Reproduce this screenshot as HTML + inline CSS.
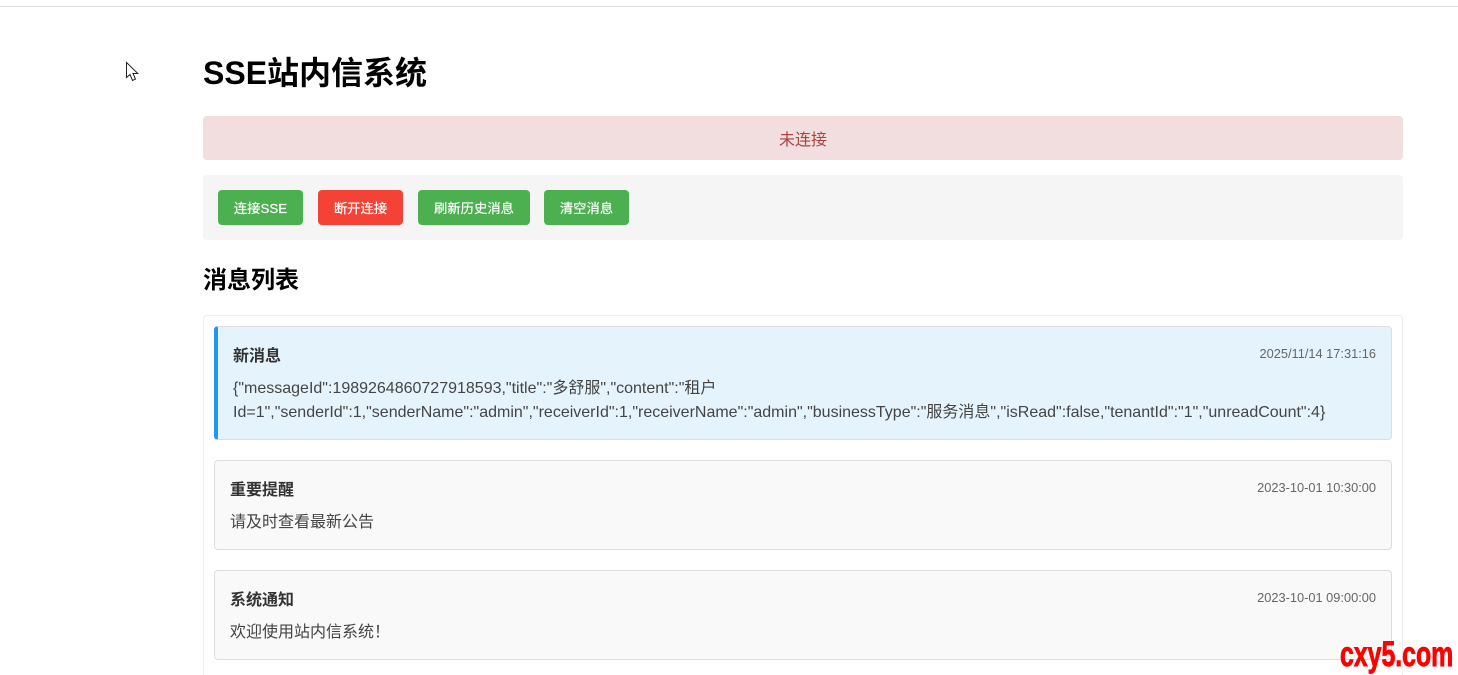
<!DOCTYPE html>
<html lang="zh-CN">
<head>
<meta charset="utf-8">
<title>SSE站内信系统</title>
<style>
html,body{margin:0;padding:0;background:#fff;width:1458px;height:675px;overflow:hidden;}
#p{position:relative;width:1458px;height:675px;overflow:hidden;font-family:"Liberation Sans","Noto Sans CJK SC",sans-serif;color:#333;}
.a{position:absolute;white-space:nowrap;}
.box{position:absolute;box-sizing:border-box;}
.btn{position:absolute;top:190px;height:35px;border-radius:4px;color:#fff;font-size:13.33px;line-height:37px;text-align:center;background:#4caf50;-webkit-text-stroke:0.2px #fff;}
.item{position:absolute;box-sizing:border-box;left:214px;width:1178px;border:1px solid #ddd;border-radius:4px;background:#f9f9f9;}
.t{font-size:16px;font-weight:bold;color:#333;line-height:24px;}
.c{font-size:16px;color:#444;line-height:24px;}
.d{font-size:12.8px;color:#666;line-height:16px;right:82px;}
</style>
</head>
<body>
<div id="p">
<div class="box" style="left:0;top:6px;width:1458px;height:1px;background:#e3e3e3;"></div>

<svg class="a" style="left:125px;top:61px" width="16" height="22" viewBox="0 0 16 22">
<path d="M1.5 1.5V16.5L5 13.5L7.5 19.5L10.5 18L8 12.5H12.8Z" fill="#fff" stroke="#222" stroke-width="1" stroke-linejoin="miter"/>
</svg>

<div class="a" style="left:203px;top:52px;font-size:32px;font-weight:bold;line-height:42px;color:#000;">SSE站内信系统</div>

<div class="box" style="left:203px;top:116px;width:1200px;height:44px;background:#f2dede;border-radius:4px;color:#a94442;font-size:16px;line-height:49px;text-align:center;">未连接</div>

<div class="box" style="left:203px;top:175px;width:1200px;height:65px;background:#f5f5f5;border-radius:4px;"></div>
<div class="btn" style="left:218px;width:85px;">连接SSE</div>
<div class="btn" style="left:318px;width:85px;background:#f44336;">断开连接</div>
<div class="btn" style="left:418px;width:112px;">刷新历史消息</div>
<div class="btn" style="left:544px;width:85px;">清空消息</div>

<div class="a" style="left:203px;top:265px;font-size:24px;font-weight:bold;line-height:32px;color:#000;">消息列表</div>

<div class="box" style="left:203px;top:315px;width:1200px;height:360px;border:1px solid #eee;border-bottom:0;border-radius:4px 4px 0 0;"></div>

<div class="item" style="top:326px;height:114px;background:#e5f3fd;border-left:4px solid #2196f3;"></div>
<div class="a t" style="left:233px;top:345px;">新消息</div>
<div class="a d" style="top:346px;">2025/11/14 17:31:16</div>
<div class="a c" style="left:233px;top:377px;">{"messageId":1989264860727918593,"title":"多舒服","content":"租户</div>
<div class="a c" style="left:233px;top:401px;">Id=1","senderId":1,"senderName":"admin","receiverId":1,"receiverName":"admin","businessType":"服务消息","isRead":false,"tenantId":"1","unreadCount":4}</div>

<div class="item" style="top:460px;height:90px;"></div>
<div class="a t" style="left:230px;top:479px;">重要提醒</div>
<div class="a d" style="top:480px;">2023-10-01 10:30:00</div>
<div class="a c" style="left:230px;top:511px;">请及时查看最新公告</div>

<div class="item" style="top:570px;height:90px;"></div>
<div class="a t" style="left:230px;top:589px;">系统通知</div>
<div class="a d" style="top:590px;">2023-10-01 09:00:00</div>
<div class="a c" style="left:230px;top:621px;">欢迎使用站内信系统！</div>

<div class="a" style="left:1340px;top:635px;font-size:35px;font-weight:bold;line-height:40px;color:#f00;transform-origin:0 0;transform:scaleX(0.71);-webkit-text-stroke:0.9px #f00;">cxy5.com</div>
</div>
</body>
</html>
